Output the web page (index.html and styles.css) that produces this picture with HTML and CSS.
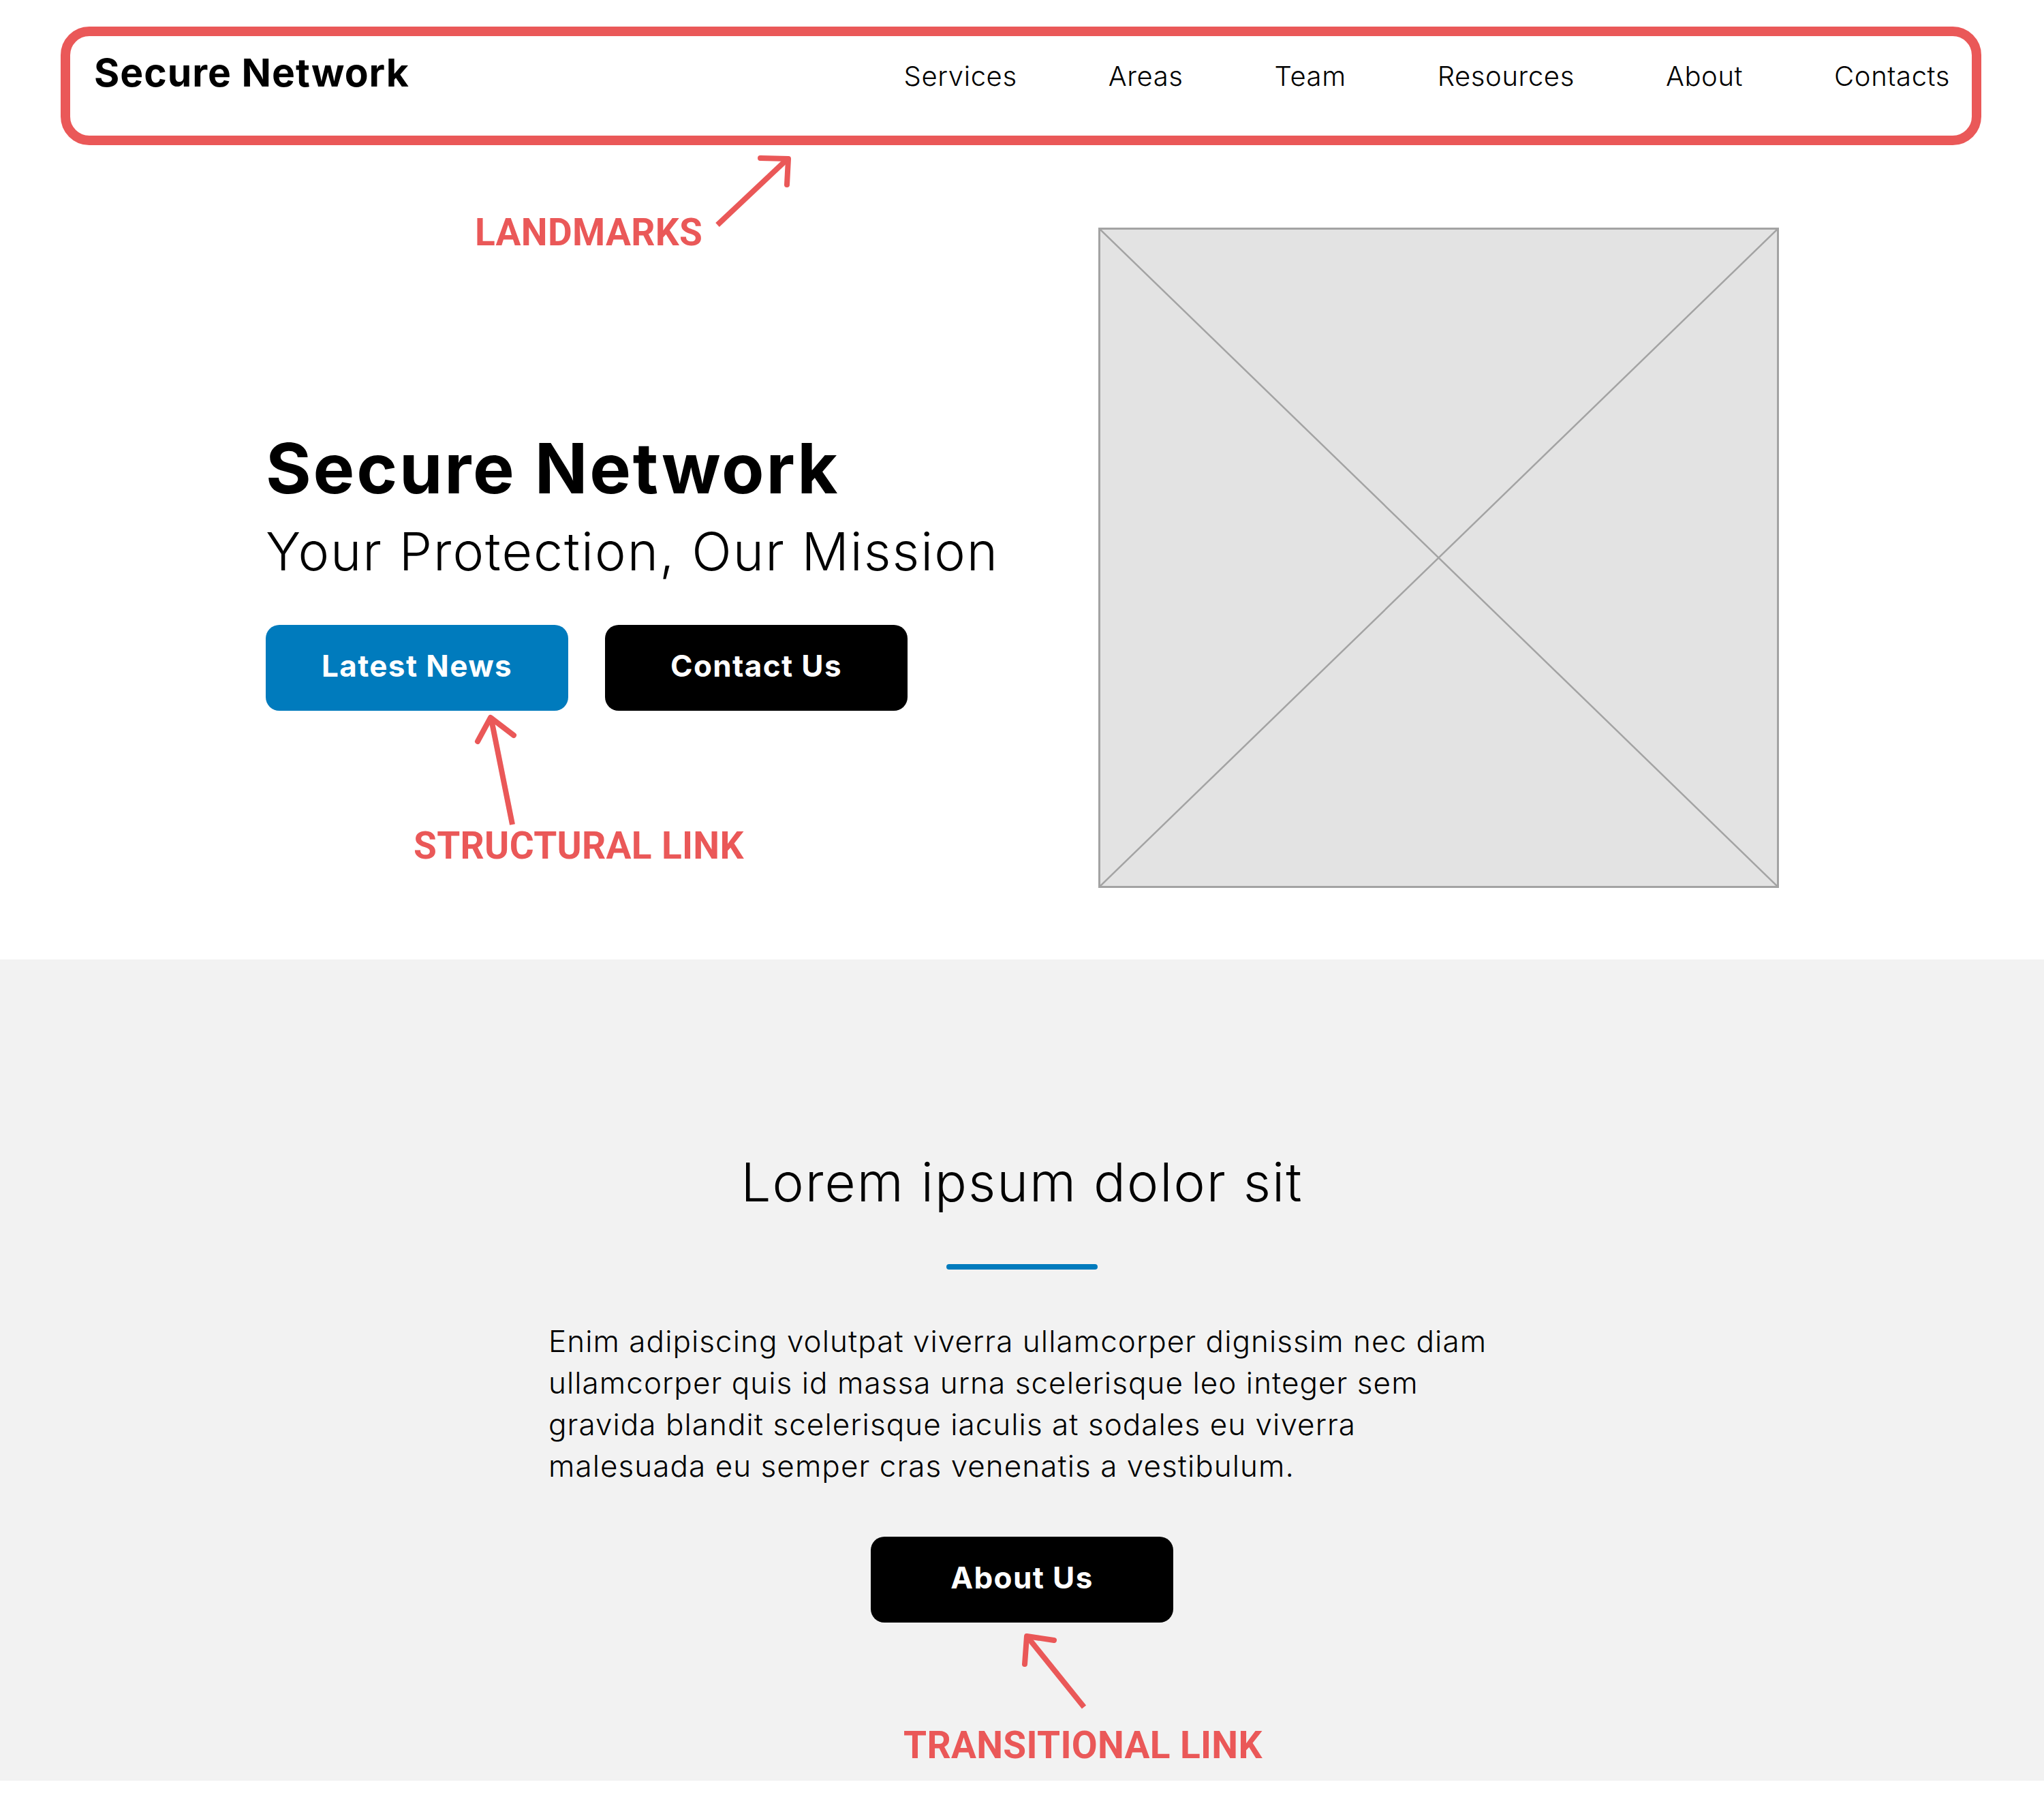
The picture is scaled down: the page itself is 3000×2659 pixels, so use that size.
FILE: index.html
```html
<!DOCTYPE html>
<html lang="en">
<head>
<meta charset="utf-8">
<title>Secure Network</title>
<link rel="stylesheet" href="styles.css">
</head>
<body>
<div class="page">
  <header class="site-header">
    <div class="brand">Secure Network</div>
    <nav class="nav">
      <a href="#">Services</a>
      <a href="#">Areas</a>
      <a href="#">Team</a>
      <a href="#">Resources</a>
      <a href="#">About</a>
      <a href="#">Contacts</a>
    </nav>
  </header>

  <section class="hero">
    <div class="hero-text">
      <h1 class="hero-title">Secure Network</h1>
      <p class="hero-sub">Your Protection, Our Mission</p>
      <div class="hero-actions">
        <a class="btn btn-blue" href="#">Latest News</a>
        <a class="btn btn-black" href="#">Contact Us</a>
      </div>
    </div>
    <div class="placeholder">
      <svg class="placeholder-x" viewBox="0 0 100 100" preserveAspectRatio="none">
        <line x1="0" y1="0" x2="100" y2="100" vector-effect="non-scaling-stroke"/>
        <line x1="100" y1="0" x2="0" y2="100" vector-effect="non-scaling-stroke"/>
      </svg>
    </div>
  </section>

  <section class="about">
    <h2 class="about-title">Lorem ipsum dolor sit</h2>
    <div class="about-rule"></div>
    <p class="about-text">Enim adipiscing volutpat viverra ullamcorper dignissim nec diam ullamcorper quis id massa urna scelerisque leo integer sem gravida blandit scelerisque iaculis at sodales eu viverra malesuada eu semper cras venenatis a vestibulum.</p>
    <a class="btn btn-black" href="#">About Us</a>
  </section>

  <div class="note note-landmarks">LANDMARKS</div>
  <div class="note note-structural">STRUCTURAL LINK</div>
  <div class="note note-transitional">TRANSITIONAL LINK</div>

  <svg class="arrows" viewBox="0 0 3000 2659" width="3000" height="2659">
    <g fill="none" stroke="#EA5858" stroke-width="8" stroke-linejoin="round">
      <line x1="1053" y1="330" x2="1155" y2="234"/>
      <polyline points="1116,232 1157,233 1155,271" stroke-linecap="round"/>
      <line x1="752" y1="1210" x2="721" y2="1055"/>
      <polyline points="701,1088 720,1053 754,1079" stroke-linecap="round"/>
      <line x1="1591" y1="2505" x2="1508" y2="2402"/>
      <polyline points="1547,2407 1507,2401 1504,2442" stroke-linecap="round"/>
    </g>
  </svg>
</div>
</body>
</html>
```

FILE: styles.css
```css
* { box-sizing: border-box; }

html, body {
  margin: 0;
  padding: 0;
  background: #ffffff;
}

body {
  font-family: "Inter", "Liberation Sans", sans-serif;
  color: #000;
}

a { color: inherit; text-decoration: none; }

.page {
  position: relative;
  width: 3000px;
  min-height: 2659px;
  overflow: hidden;
}

/* Header with annotation outline */
.site-header {
  margin: 39px 92px 0 89px;
  height: 174px;
  border: 14px solid #EA5858;
  border-radius: 42px;
  padding: 20px 32px 0 35px;
  display: flex;
  justify-content: space-between;
  align-items: flex-start;
}

.brand {
  font-size: 57px;
  font-weight: 700;
  line-height: 1.2;
  letter-spacing: 1px;
}

.nav {
  display: flex;
  gap: 134px;
  padding-top: 15px;
}

.nav a {
  font-size: 40px;
  font-weight: 300;
  line-height: 1.2;
  letter-spacing: 0.6px;
}

/* Hero */
.hero {
  display: flex;
  align-items: flex-start;
  padding: 121px 389px 105px 390px;
}

.hero-text {
  width: 1222px;
  padding-top: 292px;
}

.hero-title {
  margin: 0;
  font-size: 102px;
  font-weight: 700;
  line-height: 1.2;
  letter-spacing: 2.8px;
}

.hero-sub {
  margin: 15px 0 0;
  font-size: 77px;
  font-weight: 300;
  line-height: 1.2;
  letter-spacing: 2px;
}

.hero-actions {
  display: flex;
  gap: 54px;
  margin-top: 61px;
}

.btn {
  display: flex;
  align-items: center;
  justify-content: center;
  width: 444px;
  height: 126px;
  border-radius: 20px;
  color: #fff;
  font-size: 44px;
  font-weight: 700;
  letter-spacing: 1.4px;
  padding-bottom: 6px;
}

.btn-blue { background: #007BBD; }
.btn-black { background: #000; }

.placeholder {
  width: 999px;
  height: 969px;
  background: #E3E3E3;
  border: 3px solid #A3A3A3;
  flex-shrink: 0;
}

.placeholder-x {
  display: block;
  width: 100%;
  height: 100%;
}

.placeholder-x line {
  stroke: #A3A3A3;
  stroke-width: 2.5;
}

/* About section */
.about {
  background: #F2F2F2;
  height: 1205px;
  padding-top: 280px;
  display: flex;
  flex-direction: column;
  align-items: center;
}

.about-title {
  margin: 0;
  font-size: 78px;
  font-weight: 300;
  line-height: 1.2;
  letter-spacing: 2px;
}

.about-rule {
  width: 222px;
  height: 8px;
  border-radius: 4px;
  background: #007BBD;
  margin-top: 73px;
}

.about-text {
  width: 1390px;
  margin: 75px 0 73px;
  font-size: 44px;
  font-weight: 300;
  line-height: 61px;
  letter-spacing: 1.05px;
}

/* Annotations */
.note {
  position: absolute;
  font-family: "Roboto", "Liberation Sans", sans-serif;
  font-weight: 700;
  font-size: 55px;
  line-height: 1;
  color: #EA5858;
  white-space: nowrap;
  letter-spacing: 0.3px;
}

.note-landmarks { left: 697px; top: 314px; }
.note-structural { left: 607px; top: 1214px; }
.note-transitional { left: 1326px; top: 2534px; }

.arrows {
  position: absolute;
  left: 0;
  top: 0;
  pointer-events: none;
}
```
